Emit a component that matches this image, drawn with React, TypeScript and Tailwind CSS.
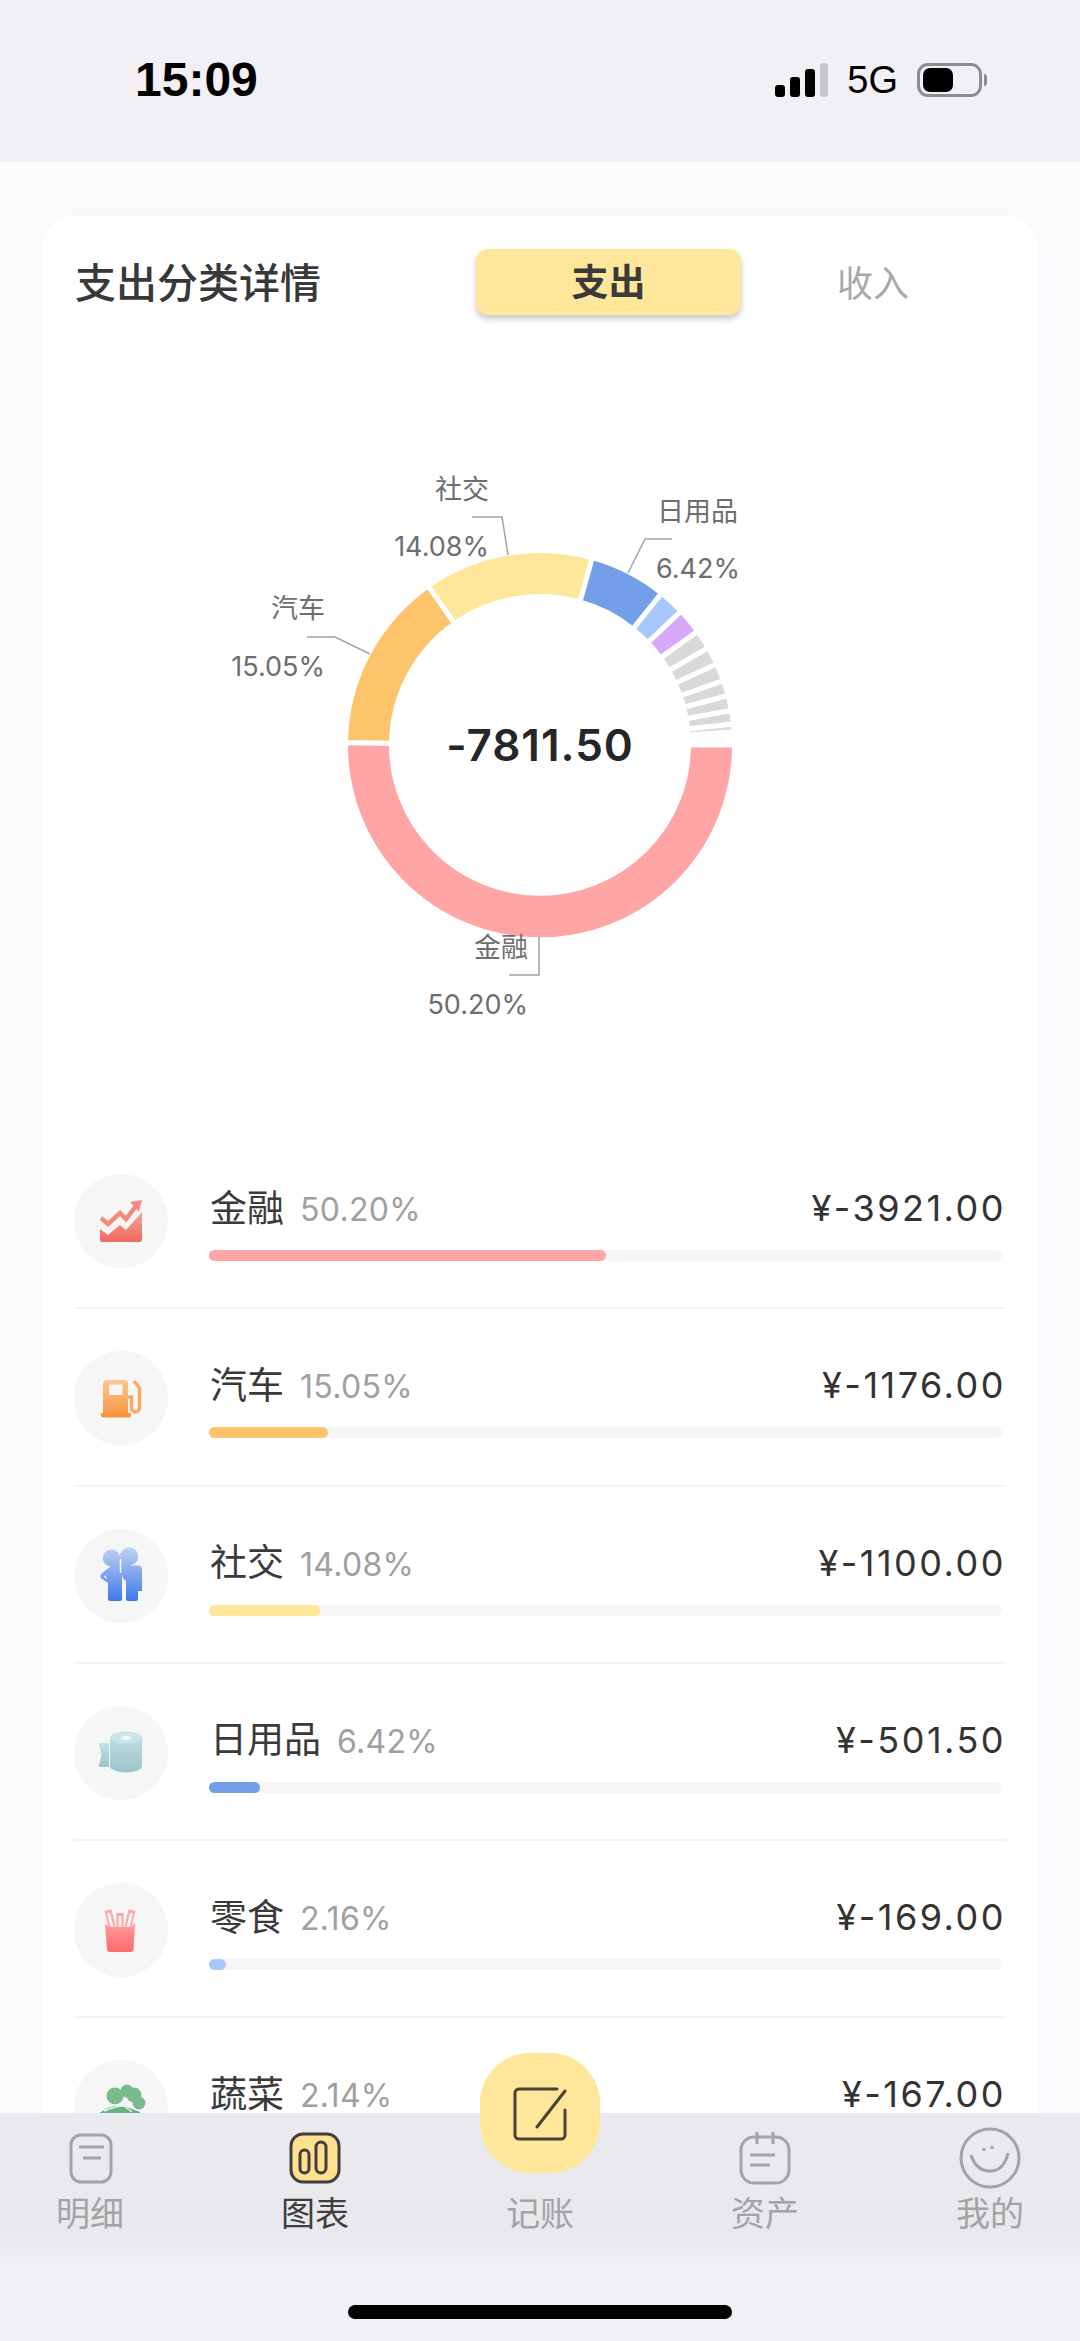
import type { ReactNode } from 'react';

type Row = {
  name: string;
  percent: string;
  amount: string;
  color: string;
  barWidth: number;
  icon: ReactNode;
};

const CX = 540;
const CY = 745;

// white stroke eats 2.5px of every edge, so the path radii sit outside what shows
function sectorPath(start: number, end: number, R = 194.5, r = 148.5) {
  const toXY = (radius: number, deg: number) => {
    const a = (deg * Math.PI) / 180;
    return `${(CX + radius * Math.cos(a)).toFixed(2)} ${(CY + radius * Math.sin(a)).toFixed(2)}`;
  };
  const large = end - start > 180 ? 1 : 0;
  return `M${toXY(R, start)} A${R} ${R} 0 ${large} 1 ${toXY(R, end)} L${toXY(r, end)} A${r} ${r} 0 ${large} 0 ${toXY(r, start)} Z`;
}

const sectors = [
  { from: 0, to: 180.72, color: '#ffa5a5' },
  { from: 180.72, to: 234.9, color: '#fec46c' },
  { from: 234.9, to: 285.6, color: '#fee69a' },
  { from: 285.6, to: 308.7, color: '#729fe8' },
  { from: 308.7, to: 316.5, color: '#a6c8fb' },
  { from: 316.5, to: 324.2, color: '#d6aafb' },
  { from: 324.2, to: 330, color: '#d9d9d9' },
  { from: 330, to: 335.4, color: '#d9d9d9' },
  { from: 335.4, to: 340.7, color: '#d9d9d9' },
  { from: 340.7, to: 345.3, color: '#d9d9d9' },
  { from: 345.3, to: 349.8, color: '#d9d9d9' },
  { from: 349.8, to: 353.8, color: '#d9d9d9' },
  { from: 353.8, to: 356.1, color: '#d9d9d9' },
];

function Gradient({ id, from, to }: { id: string; from: string; to: string }) {
  return (
    <defs>
      <linearGradient id={id} x1="0" y1="0" x2="0" y2="1">
        <stop offset="0" stopColor={from} />
        <stop offset="1" stopColor={to} />
      </linearGradient>
    </defs>
  );
}

function FinanceIcon() {
  return (
    <svg viewBox="0 0 94 94" className="w-full h-full">
      <Gradient id="fin" from="#f9a196" to="#ee6a60" />
      <path d="M26 55 L34 61 L46 51 L52 56 L68 38 V66 a2 2 0 0 1 -2 2 H28 a2 2 0 0 1 -2 -2 Z" fill="url(#fin)" />
      <path d="M27 44 L34 50 L46 39 L52 45 L62 32" fill="none" stroke="#f48a7d" strokeWidth="4.5" />
      <path d="M68 26 L56 28 L65 38 Z" fill="#f58c80" />
    </svg>
  );
}

function FuelIcon() {
  return (
    <svg viewBox="0 0 94 94" className="w-full h-full">
      <Gradient id="fuel" from="#fdc792" to="#f8933a" />
      <path
        fillRule="evenodd"
        d="M33 29 H50 a4 4 0 0 1 4 4 V62 H57 V64.5 a2 2 0 0 1 -2 2 H29 a2 2 0 0 1 -2 -2 V62 H29 V33 a4 4 0 0 1 4 -4 Z M35 33.5 V44 H48.5 V33.5 Z"
        fill="url(#fuel)"
      />
      <path d="M60 30 L65.5 37 V57 a4 4 0 0 1 -8 0 V46 H54" fill="none" stroke="#f9ab66" strokeWidth="3.5" />
    </svg>
  );
}

function PeopleIcon() {
  return (
    <svg viewBox="0 0 94 94" className="w-full h-full">
      <Gradient id="ppl" from="#c0d2f0" to="#3f78ea" />
      <g>
        <path
          fill="url(#ppl)"
          d="M37.5 20.5 a8.5 8.5 0 0 1 8.5 8.5 a9 9 0 0 1 3.5 -8.5 a9 9 0 1 1 6 16 H64 a4 4 0 0 1 4 4 V62 H64 V70 a2 2 0 0 1 -2 2 H54 a2 2 0 0 1 -2 -2 V52 Q48 50 48 44 V70 a2 2 0 0 1 -2 2 H36 a2 2 0 0 1 -2 -2 V54 L26.5 49 Q26 47 27 45 L33 40 L37 37.5 a8.5 8.5 0 0 1 .5 -17 Z"
        />
        <path d="M31.5 46 L30 48 L33 50 Z" fill="#f6f6f6" />
        <path d="M46.5 30 V44" stroke="#f6f6f6" strokeWidth="1.5" />
      </g>
    </svg>
  );
}

function RollIcon() {
  return (
    <svg viewBox="0 0 94 94" className="w-full h-full">
      <Gradient id="roll" from="#c3e2e6" to="#9cc3c8" />
      <path d="M36 32 a16 6.5 0 0 1 32 0 V60 a16 6.5 0 0 1 -32 0 Z" fill="url(#roll)" />
      <ellipse cx="52" cy="32" rx="15" ry="5.5" fill="#cbe6ea" />
      <ellipse cx="52" cy="32" rx="5" ry="2" fill="#f7f7f7" />
      <path d="M24.5 37 H35 V61 H24.5 L27.5 49 Z" fill="url(#roll)" />
    </svg>
  );
}

function FriesIcon() {
  return (
    <svg viewBox="0 0 94 94" className="w-full h-full">
      <Gradient id="fries" from="#ff9c9c" to="#ff6a6a" />
      <g fill="none" stroke="#fba8a8" strokeWidth="7">
        <path d="M34 27 L38 44" />
        <path d="M46 30 L46 44" />
        <path d="M54 44 L58 27" />
      </g>
      <g fill="none" stroke="#fdf1f1" strokeWidth="3">
        <path d="M34.5 30 L38 44" />
        <path d="M46 33 L46 44" />
        <path d="M54 44 L57.5 30" />
      </g>
      <path d="M31 41 L36 44 H57 L61 40 L59.5 66 a3 3 0 0 1 -3 3 H36 a3 3 0 0 1 -3 -3 Z" fill="url(#fries)" />
    </svg>
  );
}

function VeggieIcon() {
  return (
    <svg viewBox="0 0 94 94" className="w-full h-full">
      <g fill="#7abb8d">
        <circle cx="41" cy="36" r="8.5" />
        <circle cx="53" cy="31" r="6.5" />
        <circle cx="60" cy="35" r="7.5" />
        <circle cx="65" cy="43" r="6.5" />
        <path d="M24 54 Q36 44 50 46 L66 52 V60 H24 Z" fill="#69b27f" />
      </g>
      <path d="M30 51 Q42 46 50 46 Q54 40 58 44 M50 46 L58 52" fill="none" stroke="#e8f3ea" strokeWidth="1.5" />
    </svg>
  );
}

const rows: Row[] = [
  { name: '金融', percent: '50.20%', amount: '¥-3921.00', color: 'bg-[#ffa5a5]', barWidth: 397, icon: <FinanceIcon /> },
  { name: '汽车', percent: '15.05%', amount: '¥-1176.00', color: 'bg-[#fec46c]', barWidth: 119, icon: <FuelIcon /> },
  { name: '社交', percent: '14.08%', amount: '¥-1100.00', color: 'bg-[#fee69a]', barWidth: 111, icon: <PeopleIcon /> },
  { name: '日用品', percent: '6.42%', amount: '¥-501.50', color: 'bg-[#729fe8]', barWidth: 51, icon: <RollIcon /> },
  { name: '零食', percent: '2.16%', amount: '¥-169.00', color: 'bg-[#a6c8fb]', barWidth: 17, icon: <FriesIcon /> },
  { name: '蔬菜', percent: '2.14%', amount: '¥-167.00', color: 'bg-[#a6c8fb]', barWidth: 17, icon: <VeggieIcon /> },
];

function StatusBar() {
  return (
    <div className="flex h-[162px] items-center justify-between bg-[#f2eff5] pl-[135px] pr-[93px] pb-[2px] text-black font-['Liberation_Sans',sans-serif]">
      <span className="text-[48px] font-bold leading-none">15:09</span>
      <div className="flex items-center">
        <div className="flex items-end gap-[5px] h-[34px]">
          <div className="w-[10px] h-[12px] rounded-[3px] bg-black" />
          <div className="w-[10px] h-[20px] rounded-[3px] bg-black" />
          <div className="w-[10px] h-[28px] rounded-[3px] bg-black" />
          <div className="w-[8px] h-[34px] rounded-[3px] bg-[#c8c6cc]" />
        </div>
        <span className="ml-[19px] text-[38px] leading-none">5G</span>
        <div className="ml-[19px] flex items-center">
          <div className="flex h-[34px] w-[65px] items-center rounded-[11px] border-[3px] border-[#8e8c92] pl-[3px]">
            <div className="h-[24px] w-[30px] rounded-[7px] bg-black" />
          </div>
          <div className="ml-[2px] h-[12px] w-[3px] rounded-r-full bg-[#8e8c92]" />
        </div>
      </div>
    </div>
  );
}

function Donut() {
  const label = 'fill-[#6e6e6e] text-[27px]';
  const line = 'fill-none stroke-[#a3a3a3]';
  return (
    <svg viewBox="41 330 997 802" className="block h-[802px] w-[997px]">
      {sectors.map((s) => (
        <path key={s.from} d={sectorPath(s.from, s.to)} fill={s.color} stroke="#fff" strokeWidth="5" />
      ))}
      <polyline points="472,517 502,517 508,555" className={line} strokeWidth="1.5" />
      <polyline points="307,637 335,637 370,654" className={line} strokeWidth="1.5" />
      <polyline points="672,539 645,539 628,573" className={line} strokeWidth="1.5" />
      <polyline points="539,937 539,975 509,975" className={line} strokeWidth="1.5" />
      <g textAnchor="end" dominantBaseline="central" className={label}>
        <text x="489" y="489">社交</text>
        <text x="489" y="546">14.08%</text>
        <text x="325" y="608">汽车</text>
        <text x="325" y="666">15.05%</text>
        <text x="738" y="511">日用品</text>
        <text x="740" y="568">6.42%</text>
        <text x="528" y="947">金融</text>
        <text x="528" y="1004">50.20%</text>
      </g>
      <text x={CX} y="745" textAnchor="middle" dominantBaseline="central" className="fill-[#262626] text-[44px] font-semibold tracking-[1px]">
        -7811.50
      </text>
    </svg>
  );
}

function CategoryRow({ row, last }: { row: Row; last: boolean }) {
  return (
    <div className={`flex h-[177.25px] pt-[42px] ${last ? '' : 'border-b-2 border-[#f4f4f4]'}`}>
      <div className="h-[94px] w-[94px] shrink-0 rounded-full bg-[#f6f6f6]">{row.icon}</div>
      <div className="ml-[41px] flex-1 pt-[9px]">
        <div className="flex h-[50px] items-center">
          <span className="ml-[1px] text-[37px] leading-none text-[#3a3a3a]">{row.name}</span>
          <span className="ml-[16px] mt-[4px] text-[32px] leading-none tracking-[0.3px] text-[#a0a0a0]">{row.percent}</span>
          <span className="ml-auto text-[36px] leading-none tracking-[2.5px] text-[#333333]">{row.amount}</span>
        </div>
        <div className="mr-[4px] mt-[17px] h-[11px] rounded-full bg-[#f6f6f6]">
          <div className={`h-full rounded-full ${row.color}`} style={{ width: row.barWidth }} />
        </div>
      </div>
    </div>
  );
}

function TabItem({ label, active, children }: { label: string; active?: boolean; children?: ReactNode }) {
  return (
    <div className="flex w-[90px] flex-col items-center">
      <div className="flex h-[66px] w-[90px] items-center justify-center">{children}</div>
      <span className={`mt-[1px] text-[34px] leading-[44px] ${active ? 'text-[#3f3f3f]' : 'text-[#a3a3a3]'}`}>{label}</span>
    </div>
  );
}

function TabBar() {
  return (
    <div className="absolute bottom-0 left-0 w-[1080px] bg-[linear-gradient(to_bottom,#ebebef_0%,#e8e8ed_50%,#e9e9ee_56%,#f1f1f5_66%,#f1f1f5_100%)]">
      <div className="flex h-[127px] justify-between px-[45px] pt-[12px]">
        <TabItem label="明细">
          <svg width="44" height="51" viewBox="0 0 44 51" fill="none" stroke="#a3a3a3" strokeWidth="3" className="ml-[1px]">
            <rect x="2" y="2" width="40" height="47" rx="10" />
            <path d="M10 14 H35 M14 25 H32" />
          </svg>
        </TabItem>
        <TabItem label="图表" active>
          <svg width="52" height="52" viewBox="0 0 52 52" stroke="#3f3f3f" strokeWidth="3">
            <rect x="2" y="2" width="48" height="48" rx="12" fill="#fee08e" />
            <rect x="11" y="18" width="9" height="23" rx="4.5" fill="none" />
            <rect x="27" y="10" width="10" height="31" rx="5" fill="none" />
          </svg>
        </TabItem>
        <TabItem label="记账" />
        <TabItem label="资产">
          <svg width="52" height="54" viewBox="0 0 52 54" fill="none" stroke="#a3a3a3" strokeWidth="3">
            <rect x="2" y="6" width="48" height="46" rx="13" />
            <path d="M18 1 V13 M34 1 V13 M11 24 H36 M11 34 H31" />
          </svg>
        </TabItem>
        <TabItem label="我的">
          <svg width="62" height="62" viewBox="0 0 62 62" fill="none" stroke="#a3a3a3" strokeWidth="3">
            <circle cx="31" cy="31" r="29" />
            <path d="M12 28 Q17 44 31 44 Q45 44 49 26" />
            <path d="M25 21 V24 M33 19 V22" />
          </svg>
        </TabItem>
      </div>
      <div className="flex h-[101px] justify-center pt-[65px]">
        <div className="h-[14px] w-[384px] rounded-full bg-black" />
      </div>
      {/* floating add button sits over the bar */}
      <div className="absolute left-[480px] top-[-60px] flex h-[120px] w-[120px] items-center justify-center rounded-[50px] bg-[#fee69a]">
        <svg width="120" height="120" viewBox="0 0 120 120" fill="none" stroke="#4a4232" strokeWidth="3" strokeLinecap="round">
          <path d="M77 36 H39 a4 4 0 0 0 -4 4 V82 a4 4 0 0 0 4 4 H81 a4 4 0 0 0 4 -4 V57" />
          <path d="M85 38 L57 74" />
        </svg>
      </div>
    </div>
  );
}

export default function App() {
  return (
    <div className="relative h-[2341px] w-[1080px] overflow-hidden bg-[#fdfbfe] font-['Inter','Noto_Sans_CJK_SC',sans-serif]">
      <StatusBar />
      <div className="px-[42px] pt-[54px]">
        <div className="rounded-[32px] bg-white pt-[33px] shadow-[0_0_20px_rgba(170,150,190,0.06)]">
          <div className="flex h-[66px] items-center pl-[33px] pr-[33px]">
            <h2 className="pt-[3px] text-[41px] font-medium leading-none text-[#383838]">支出分类详情</h2>
            <div className="ml-auto flex">
              <div className="flex h-[66px] w-[265px] items-center justify-center rounded-[12px] bg-[#fee69a] pt-[2px] text-[37px] font-semibold text-[#3a3a3a] shadow-[0_4px_6px_rgba(0,0,0,0.22)]">
                支出
              </div>
              <div className="flex h-[66px] w-[264px] items-center justify-center pt-[3px] text-[36px] text-[#a8a8a8]">收入</div>
            </div>
          </div>
          <div className="-ml-[1px] mt-[15px]">
            <Donut />
          </div>
          <div className="mx-[32px]">
            {rows.map((row, i) => (
              <CategoryRow key={row.name} row={row} last={i === rows.length - 1} />
            ))}
          </div>
        </div>
      </div>
      <TabBar />
    </div>
  );
}
